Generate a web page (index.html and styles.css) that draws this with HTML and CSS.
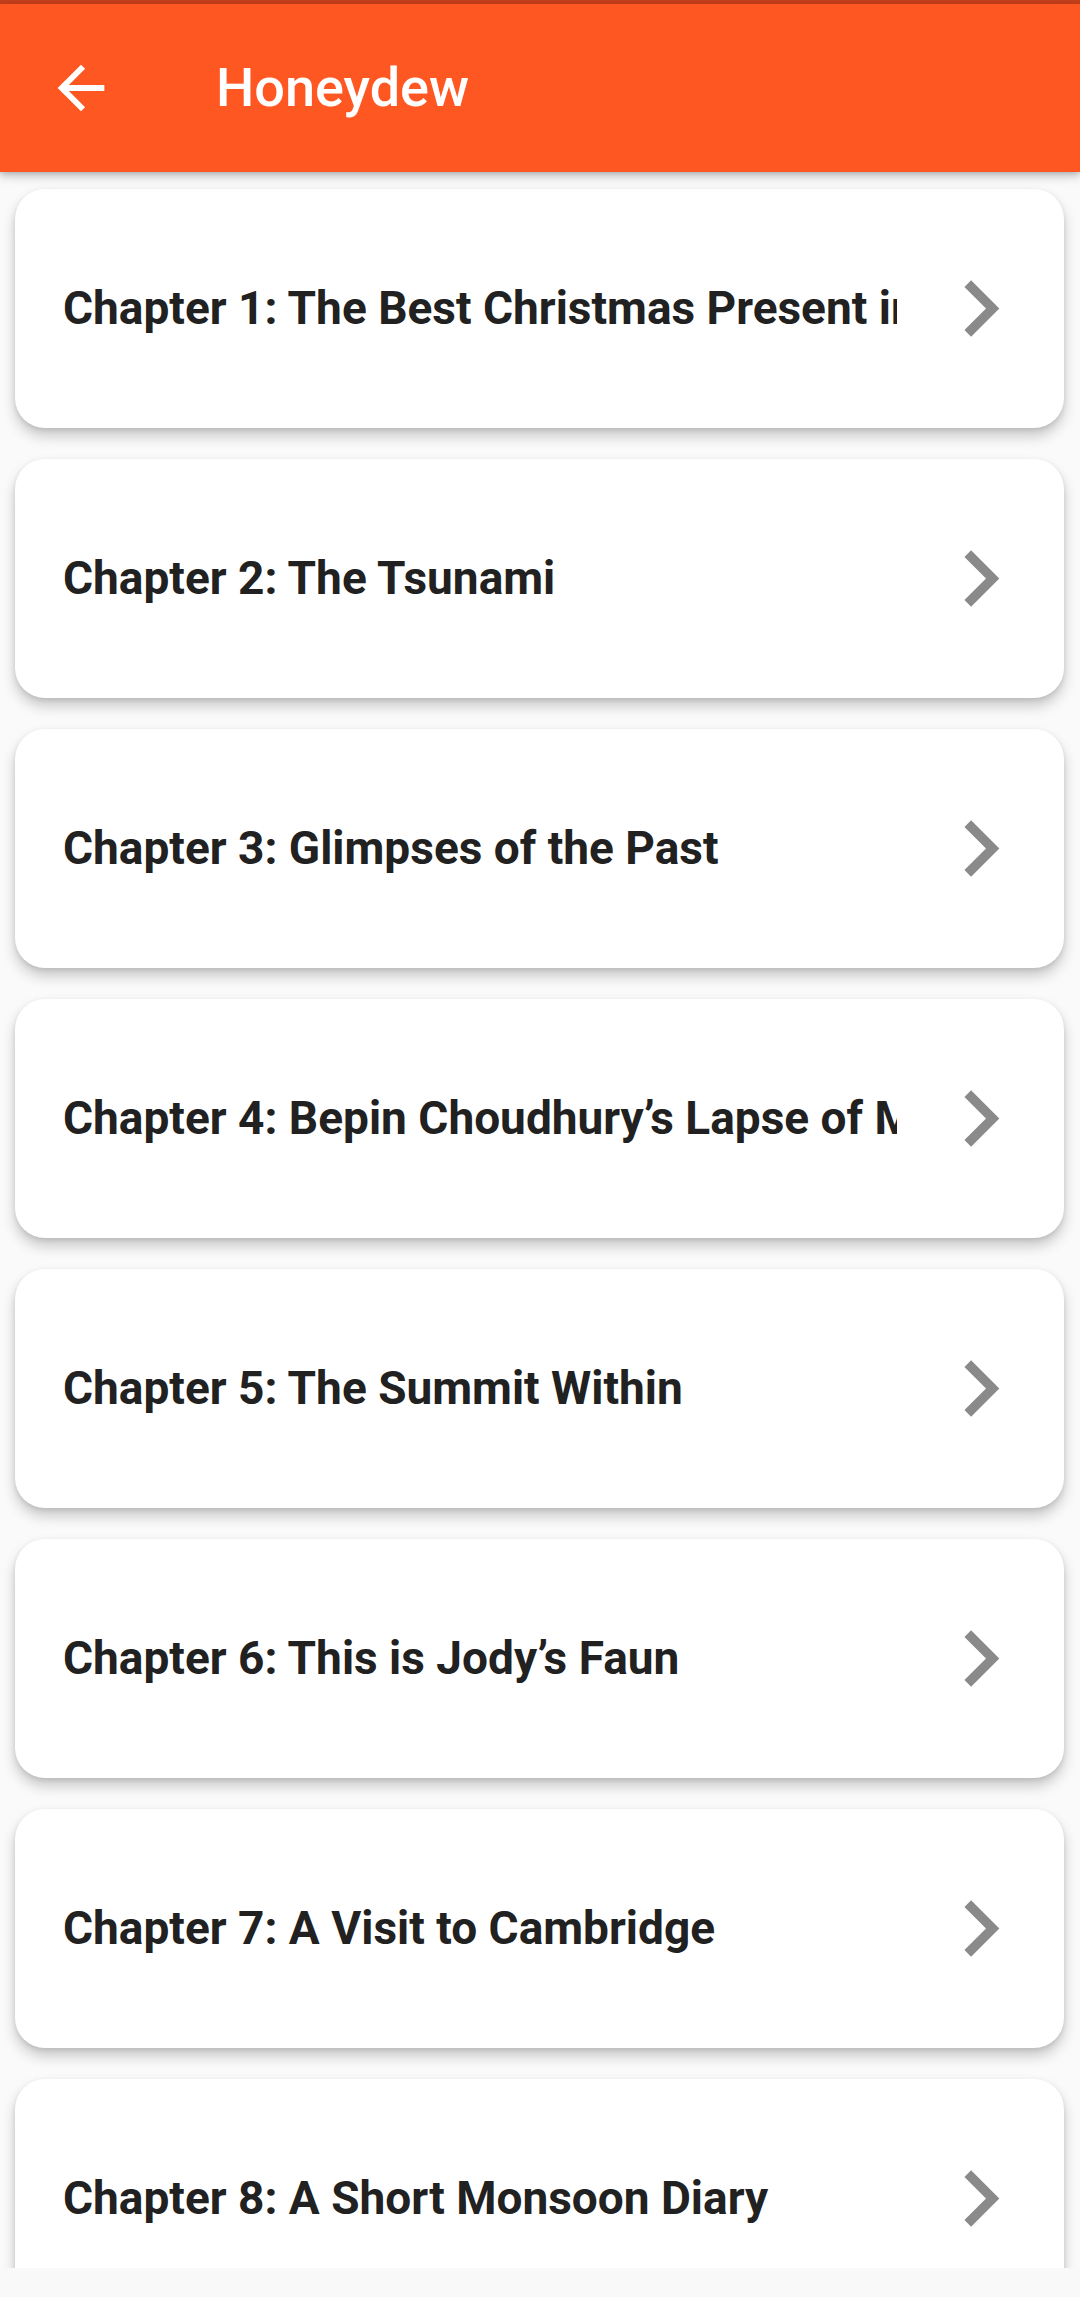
FILE: index.html
```html
<!DOCTYPE html>
<html>
<head>
<meta charset="utf-8">
<link rel="stylesheet" href="styles.css">
</head>
<body>
<div class="screen">
  <div class="status"></div>
  <header class="appbar">
    <svg class="back" viewBox="0 0 24 24"><path d="M20 11H7.83l5.59-5.59L12 4l-8 8 8 8 1.41-1.41L7.83 13H20v-2z" fill="#fff"/></svg>
    <h1 class="title">Honeydew</h1>
  </header>
  <main class="list">
    <div class="card"><div class="label">Chapter 1: The Best Christmas Present in the World</div><svg class="chev" viewBox="0 0 24 24"><path d="M10 6L8.59 7.41 13.17 12l-4.58 4.59L10 18l6-6z"/></svg></div>
    <div class="card"><div class="label">Chapter 2: The Tsunami</div><svg class="chev" viewBox="0 0 24 24"><path d="M10 6L8.59 7.41 13.17 12l-4.58 4.59L10 18l6-6z"/></svg></div>
    <div class="card"><div class="label">Chapter 3: Glimpses of the Past</div><svg class="chev" viewBox="0 0 24 24"><path d="M10 6L8.59 7.41 13.17 12l-4.58 4.59L10 18l6-6z"/></svg></div>
    <div class="card"><div class="label">Chapter 4: Bepin Choudhury’s Lapse of Memory</div><svg class="chev" viewBox="0 0 24 24"><path d="M10 6L8.59 7.41 13.17 12l-4.58 4.59L10 18l6-6z"/></svg></div>
    <div class="card"><div class="label">Chapter 5: The Summit Within</div><svg class="chev" viewBox="0 0 24 24"><path d="M10 6L8.59 7.41 13.17 12l-4.58 4.59L10 18l6-6z"/></svg></div>
    <div class="card"><div class="label">Chapter 6: This is Jody’s Faun</div><svg class="chev" viewBox="0 0 24 24"><path d="M10 6L8.59 7.41 13.17 12l-4.58 4.59L10 18l6-6z"/></svg></div>
    <div class="card"><div class="label">Chapter 7: A Visit to Cambridge</div><svg class="chev" viewBox="0 0 24 24"><path d="M10 6L8.59 7.41 13.17 12l-4.58 4.59L10 18l6-6z"/></svg></div>
    <div class="card"><div class="label">Chapter 8: A Short Monsoon Diary</div><svg class="chev" viewBox="0 0 24 24"><path d="M10 6L8.59 7.41 13.17 12l-4.58 4.59L10 18l6-6z"/></svg></div>
  </main>
  <div class="navspace"></div>
</div>
</body>
</html>
```

FILE: styles.css
```css
html, body {
  margin: 0;
  padding: 0;
  background: #fafafa;
}
body {
  font-family: Roboto, "Noto Sans", "Liberation Sans", sans-serif;
}
.screen {
  width: 1080px;
  height: 2297px;
  display: flex;
  flex-direction: column;
  overflow: hidden;
}
.status {
  height: 4px;
  background: #c43f1a;
  flex: none;
}
.appbar {
  height: 168px;
  flex: none;
  background: #ff5722;
  display: flex;
  align-items: center;
  position: relative;
  z-index: 2;
  box-shadow: 0 4px 10px rgba(0,0,0,0.22), 0 2px 4px rgba(0,0,0,0.12);
}
.back {
  width: 70px;
  height: 70px;
  margin-left: 46px;
  flex: none;
}
.title {
  margin: 0 0 0 100px;
  color: #fff;
  font-size: 54px;
  font-weight: 500;
  line-height: 1;
}
.list {
  flex: 1;
  overflow: hidden;
  padding: 17px 16px 0 15px;
  display: flex;
  flex-direction: column;
  gap: 31px;
}
.card {
  flex: none;
  height: 239px;
  background: #fff;
  border-radius: 30px;
  box-shadow: 0 8px 14px rgba(0,0,0,0.20), 0 2px 5px rgba(0,0,0,0.10);
  display: flex;
  align-items: center;
  padding: 0 27px 0 48px;
}
.label {
  flex: 1;
  min-width: 0;
  overflow: hidden;
  white-space: nowrap;
  font-size: 46px;
  font-weight: 700;
  color: #212121;
  line-height: 1.2;
}
.chev {
  width: 113px;
  height: 113px;
  margin-left: 27px;
  flex: none;
  fill: #8a8a8a;
}
.navspace {
  height: 29px;
  flex: none;
  background: #f9f9f9;
}
```
